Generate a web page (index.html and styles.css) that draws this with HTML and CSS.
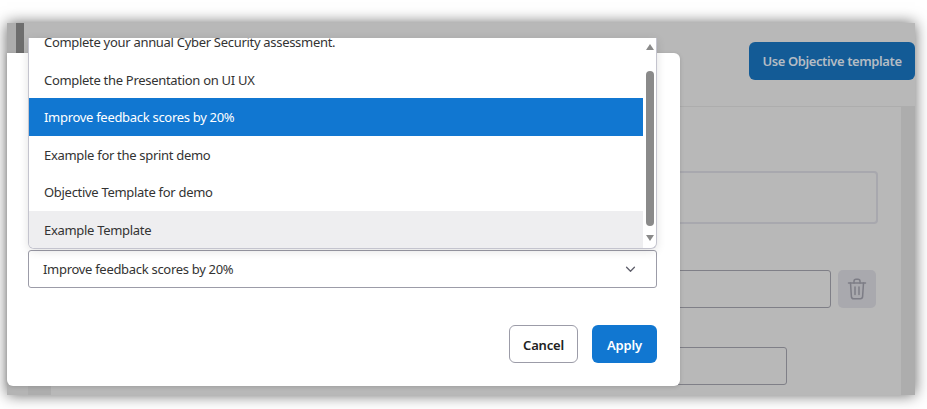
FILE: index.html
```html
<!DOCTYPE html>
<html lang="en">

<head>
    <meta charset="UTF-8">
    <meta name="viewport" content="width=device-width, initial-scale=1.0">
    <title>Use Objective template</title>
    <link rel="stylesheet" href="styles.css">
</head>

<body>
    <div class="window">
        <div class="page-header">
            <div class="edge-strip"></div>
            <div class="edge-handle"></div>
            <button class="template-btn">Use Objective template</button>
        </div>
        <div class="page-body">
            <div class="page-gutter"></div>
            <div class="page-form">
                <div class="field field-large"></div>
                <div class="field-row">
                    <div class="field field-medium"></div>
                    <div class="trash-btn">
                        <svg width="20" height="22" viewBox="0 0 20 22" fill="none" stroke="#7d7d86" stroke-width="1.5" stroke-linecap="round" stroke-linejoin="round">
                            <path d="M1.5 5h17" />
                            <path d="M7 5V3.2C7 2 7.8 1.2 9 1.2h2c1.2 0 2 .8 2 2V5" />
                            <path d="M3.5 5l.9 13.6c.1 1.300.9 2.100 2.200 2.100h6.800c1.300 0 2.100-.8 2.200-2.100L16.500 5" />
                            <path d="M8 9v7.500M12 9v7.500" />
                        </svg>
                    </div>
                </div>
                <div class="field field-small"></div>
            </div>
        </div>

        <div class="modal">
            <div class="select-box">
                <span>Improve feedback scores by 20%</span>
                <svg width="11" height="7" viewBox="0 0 12 8" fill="none" stroke="#5f5f6b" stroke-width="1.500" stroke-linecap="round" stroke-linejoin="round">
                    <path d="M1.500 1.500L6 6l4.500-4.500" />
                </svg>
            </div>
            <div class="modal-footer">
                <button class="btn-cancel">Cancel</button>
                <button class="btn-apply">Apply</button>
            </div>
        </div>

        <div class="dropdown">
            <ul class="options">
                <li>Complete your annual Cyber Security assessment.</li>
                <li>Complete the Presentation on UI UX</li>
                <li class="selected">Improve feedback scores by 20%</li>
                <li>Example for the sprint demo</li>
                <li>Objective Template for demo</li>
                <li class="hovered">Example Template</li>
            </ul>
            <div class="scrollbar">
                <span class="arrow-up"></span>
                <span class="thumb"></span>
                <span class="arrow-down"></span>
            </div>
        </div>
    </div>
</body>

</html>
```

FILE: styles.css
```css
* {
    box-sizing: border-box;
}

body {
    font-family: "Noto Sans", "Open Sans", Arial, sans-serif;
    font-size: 13px;
    letter-spacing: -0.3px;
    margin: 0;
    padding: 23px 12px 14px 7px;
    height: 409px;
    overflow: hidden;
    background-color: #fff;
    color: #333;
}

.window {
    position: relative;
    width: 908px;
    height: 372px;
    display: flex;
    flex-direction: column;
    background-color: #b8b8b8;
    box-shadow: 0 0 14px rgba(0, 0, 0, 0.6);
}

.page-header {
    position: relative;
    height: 84px;
    padding-top: 19px;
    display: flex;
    justify-content: flex-end;
    align-items: flex-start;
    border-bottom: 1px solid #adadad;
}

.edge-strip {
    position: absolute;
    left: 0;
    top: 0;
    width: 9px;
    height: 30px;
    background-color: #adadad;
}

.edge-handle {
    position: absolute;
    left: 9px;
    top: 0;
    width: 8px;
    height: 30px;
    background-color: #6e6e6e;
}

.template-btn {
    width: 166px;
    height: 38px;
    font-family: inherit;
    font-size: 13px;
    letter-spacing: -0.4px;
    font-weight: 600;
    white-space: nowrap;
    color: #b4bcc4;
    background-color: #135b96;
    border: none;
    border-radius: 6px;
}

.page-body {
    flex: 1;
    display: flex;
}

.page-gutter {
    width: 44px;
    background-color: #b4b4b4;
    border-right: 23px solid #adadad;
}

.page-form {
    width: 864px;
    padding: 64px 37px 0 0;
    border-right: 14px solid #adadad;
    display: flex;
    flex-direction: column;
    align-items: flex-end;
}

.field {
    border-radius: 4px;
}

.field-large {
    width: 300px;
    height: 53px;
    margin-right: -14px;
    border: 2px solid #a8a8ae;
}

.field-row {
    display: flex;
    gap: 7px;
    margin-top: 46px;
    margin-right: -12px;
}

.field-medium {
    width: 300px;
    height: 38px;
    border: 1px solid #7f7f87;
    border-radius: 3px;
}

.trash-btn {
    width: 38px;
    height: 38px;
    display: flex;
    justify-content: center;
    align-items: center;
    background-color: #a9a9ae;
    border-radius: 5px;
}

.field-small {
    width: 300px;
    height: 38px;
    margin-top: 39px;
    margin-right: 77px;
    border: 1px solid #7f7f87;
    border-radius: 3px;
}

.modal {
    position: absolute;
    left: 0;
    top: 30px;
    width: 673px;
    height: 333px;
    padding: 197px 23px 0 21px;
    background-color: #fff;
    border-radius: 0 6px 6px 6px;
    box-shadow: 0 1px 4px rgba(0, 0, 0, 0.15);
}

.select-box {
    height: 38px;
    padding: 0 20px 0 14px;
    display: flex;
    justify-content: space-between;
    align-items: center;
    border: 1px solid #9c9ca8;
    border-radius: 3px;
}

.modal-footer {
    display: flex;
    justify-content: flex-end;
    gap: 14px;
    margin-top: 37px;
}

.modal-footer button {
    height: 38px;
    padding-top: 2px;
    font-family: inherit;
    font-size: 13px;
    letter-spacing: -0.2px;
    font-weight: 600;
    border-radius: 6px;
}

.btn-cancel {
    width: 69px;
    color: #222;
    background-color: #fff;
    border: 1px solid #9c9ca8;
}

.btn-apply {
    width: 65px;
    color: #fff;
    background-color: #1177d1;
    border: none;
}

.dropdown {
    position: absolute;
    left: 21px;
    top: 15px;
    width: 629px;
    height: 211px;
    display: flex;
    overflow: hidden;
    background-color: #fff;
    border: 1px solid #c4c4ce;
    border-top: none;
    border-radius: 0 0 6px 6px;
    box-shadow: 0 2px 10px rgba(0, 0, 0, 0.12);
}

.options {
    flex: 1;
    margin: -15px 0 0;
    padding: 0;
    list-style: none;
}

.options li {
    height: 37.5px;
    line-height: 39px;
    padding-left: 15px;
}

.options .selected {
    color: #fff;
    background-color: #1177d1;
}

.options .hovered {
    background-color: #eeeef0;
}

.scrollbar {
    width: 13px;
    display: flex;
    flex-direction: column;
    align-items: center;
    padding: 6px 0 5px;
}

.arrow-up,
.arrow-down {
    width: 0;
    height: 0;
    border-left: 4px solid transparent;
    border-right: 4px solid transparent;
}

.arrow-up {
    border-bottom: 6px solid #8a8a8a;
}

.arrow-down {
    border-top: 6px solid #8a8a8a;
}

.thumb {
    width: 8px;
    height: 155px;
    margin: 21px 0 9px;
    background-color: #8a8a8a;
    border-radius: 4px;
}
```
